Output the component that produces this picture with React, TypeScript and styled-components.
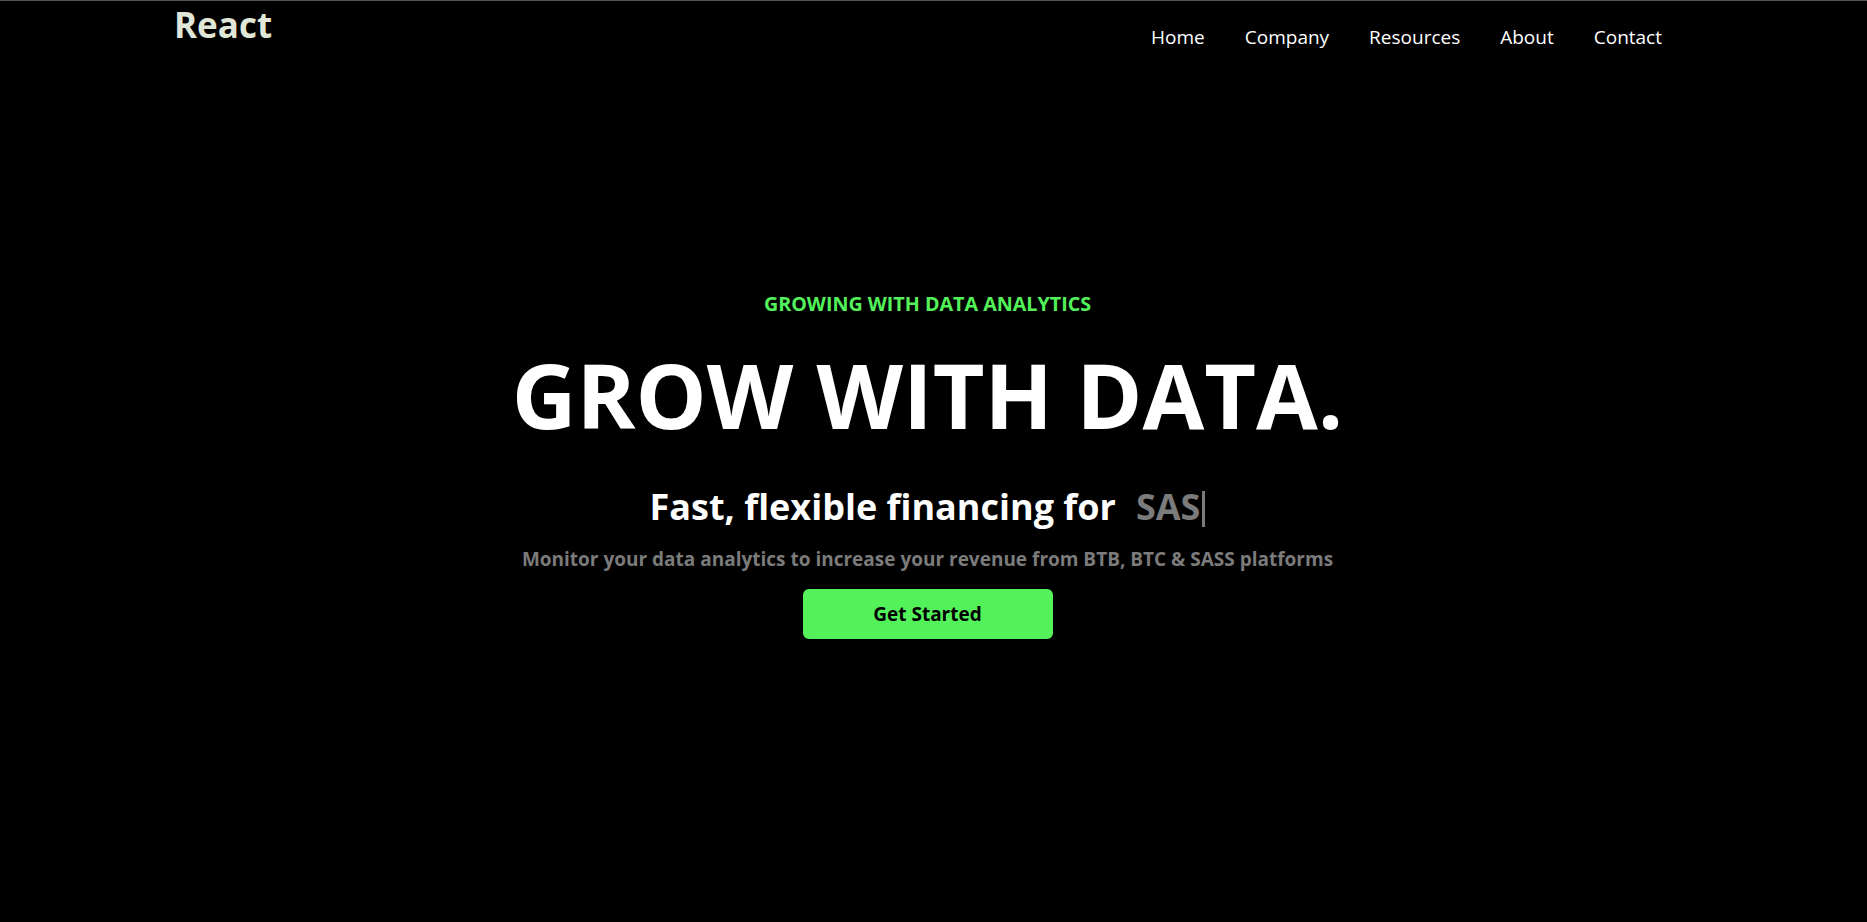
import React from 'react';
import styled, { createGlobalStyle } from 'styled-components';

const GlobalStyle = createGlobalStyle`
  html, body {
    margin: 0;
    padding: 0;
    background: #000;
  }
  body {
    font-family: 'Open Sans', 'Noto Sans', sans-serif;
    color: #fff;
  }
  * {
    box-sizing: border-box;
  }
`;

const navItems = ['Home', 'Company', 'Resources', 'About', 'Contact'];

const Navbar = () => {
  return (
    <HeaderWrap>
      <Logo>React</Logo>
      <NavList>
        {navItems.map((item) => (
          <NavItem key={item}>
            <a href="#">{item}</a>
          </NavItem>
        ))}
      </NavList>
    </HeaderWrap>
  );
};

const Hero = () => {
  return (
    <HeroWrap>
      <Tagline>GROWING WITH DATA ANALYTICS</Tagline>
      <Title>GROW WITH DATA.</Title>
      <Subtitle>
        Fast, flexible financing for
        <Typed>
          SAS
          <Cursor />
        </Typed>
      </Subtitle>
      <Description>Monitor your data analytics to increase your revenue from BTB, BTC &amp; SASS platforms</Description>
      <StartButton type="button">Get Started</StartButton>
    </HeroWrap>
  );
};

export default function App() {
  return (
    <Page>
      <GlobalStyle />
      <Navbar />
      <Hero />
    </Page>
  );
}

const Page = styled.div`
  min-height: 100vh;
  background: #000;
  border-top: 1px solid #555;
`;

const HeaderWrap = styled.header`
  display: flex;
  justify-content: space-between;
  align-items: flex-start;
  padding: 0 205px 0 174px;
`;

const Logo = styled.h1`
  margin: 0;
  font-size: 35px;
  line-height: 48px;
  font-weight: 700;
  color: #e0e6d8;
`;

const NavList = styled.ul`
  display: flex;
  gap: 40px;
  list-style: none;
  margin: 0;
  padding: 24px 0 0;
`;

const NavItem = styled.li`
  font-size: 19px;
  line-height: 24px;

  a {
    color: #fff;
    text-decoration: none;
  }
`;

const HeroWrap = styled.section`
  display: flex;
  flex-direction: column;
  align-items: center;
  text-align: center;
  padding: 241px 12px 0 0;
`;

const Tagline = styled.p`
  margin: 0;
  font-size: 19.7px;
  line-height: 28px;
  font-weight: 700;
  color: #53f25a;
`;

const Title = styled.h1`
  margin: 23px 0 0;
  font-size: 89.5px;
  line-height: 1.2;
  font-weight: 700;
  color: #fff;
`;

const Subtitle = styled.div`
  margin-top: 34px;
  font-size: 36px;
  line-height: 50px;
  font-weight: 700;
  color: #fff;
`;

const Typed = styled.span`
  padding-left: 20px;
  color: #7b7b7b;
`;

const Cursor = styled.span`
  display: inline-block;
  width: 3px;
  height: 36px;
  margin-left: 2px;
  vertical-align: -7px;
  background: #7b7b7b;
`;

const Description = styled.p`
  margin: 13px 0 0;
  font-size: 19px;
  line-height: 28px;
  font-weight: 700;
  color: #7b7b7b;
`;

const StartButton = styled.button`
  margin-top: 16px;
  width: 250px;
  height: 50px;
  border: none;
  border-radius: 6px;
  background: #53f25a;
  color: #000;
  font-family: inherit;
  font-size: 19px;
  font-weight: 700;
  cursor: pointer;
`;
